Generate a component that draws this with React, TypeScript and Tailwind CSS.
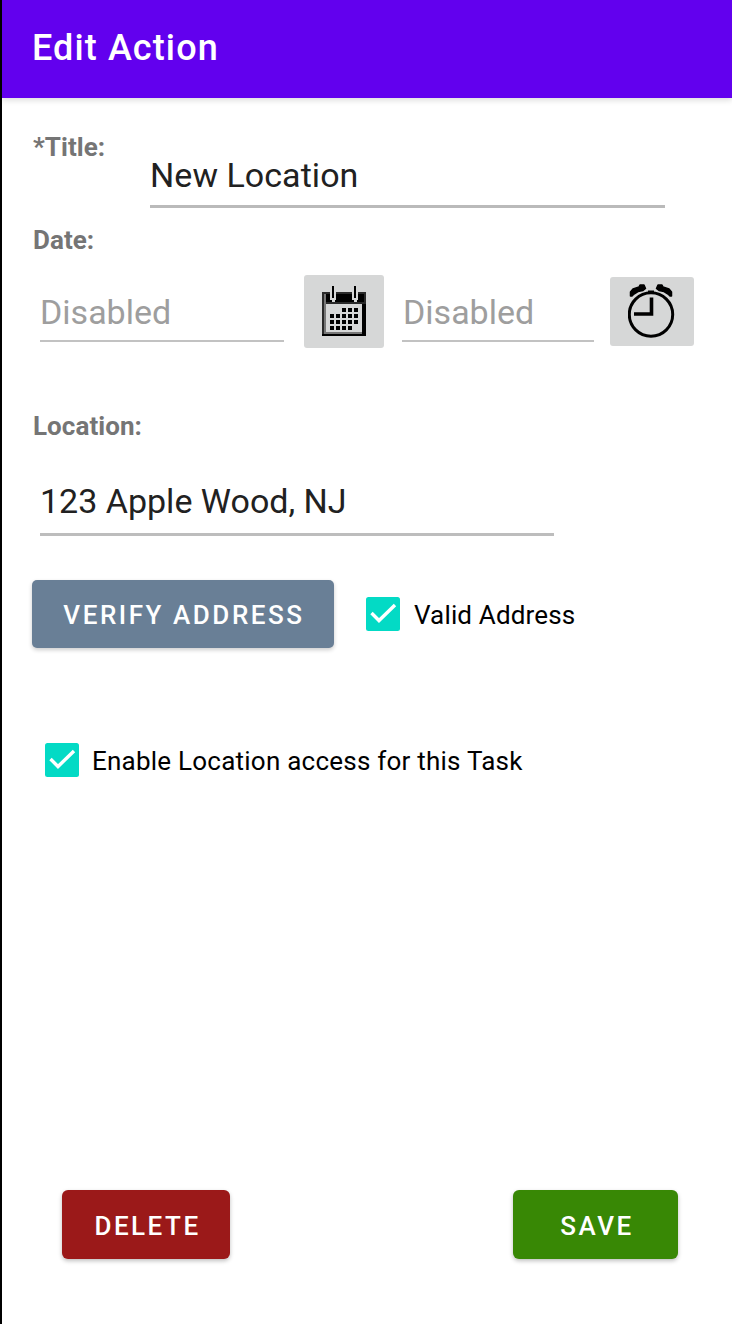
import type { ReactNode } from "react";

function Label({ children }: { children: ReactNode }) {
  return <div className="pl-px text-[26px] leading-8 font-bold tracking-[0.05px] whitespace-nowrap text-[#757575]">{children}</div>;
}

function CheckBox({ children }: { children: ReactNode }) {
  return (
    <div className="flex h-9 items-center">
      <svg width="34" height="34" viewBox="0 0 34 34" className="shrink-0">
        <rect width="34" height="34" rx="2.5" fill="#03dac5" />
        <path d="M5.5 16 L13 23.500 L29 8" fill="none" stroke="#fff" strokeWidth="3.4" />
      </svg>
      {children}
    </div>
  );
}

function CalendarIcon() {
  const dots = [
    [18, 24], [24, 24], [30, 24],
    [6, 30], [12, 30], [18, 30], [24, 30], [30, 30],
    [6, 36], [12, 36], [18, 36], [24, 36], [30, 36],
    [6, 42], [12, 42], [18, 42], [24, 42],
  ];
  return (
    <svg width="44" height="50" viewBox="0 0 44 50" shapeRendering="crispEdges">
      <rect y="6" width="44" height="44" fill="#2a2a2a" />
      <rect x="2" y="8" width="40" height="8" fill="#000" />
      <rect x="4" y="18" width="36" height="28" fill="#d6d7d7" />
      <path d="M4 46h36v2H4z" fill="#777" />
      <path d="M2 8h2v40H2z" fill="#777" />
      <path d="M40 18h4v32H0v-2h40z" fill="#000" />
      <path d="M8 6h2v8H8zM12 4h2v10h-2zM10 12h3v4h-3zM30 6h2v8h-2zM34 4h2v10h-2zM32 12h3v4h-3z" fill="#d6d7d7" />
      <path d="M10 0h2v12h-2zM32 0h2v12h-2z" fill="#000" />
      {dots.map(([x, y]) => (
        <rect key={`${x}-${y}`} x={x + 2} y={y - 2} width="4" height="4" fill="#000" />
      ))}
    </svg>
  );
}

function AlarmIcon() {
  return (
    <svg width="48" height="56" viewBox="0 0 48 56" fill="none" stroke="#000">
      <circle cx="23" cy="31.500" r="21.700" strokeWidth="3" />
      <path d="M23.500 14.500v16.500H6" strokeWidth="3.600" />
      <path d="M2.500 13V9L5 6L11 4L12 2H16L17.500 5.500L15 7.500L10 8.500L6 11L4 13zM43.500 13V9L41 6L35 4L34 2H30L28.500 5.500L31 7.500L36 8.500L40 11L42 13z" fill="#000" strokeWidth="1.500" strokeLinejoin="round" />
      <path d="M20 8.500h6" strokeWidth="2" />
    </svg>
  );
}

export default function App() {
  return (
    <div className="flex h-[1324px] w-[732px] flex-col border-l-2 border-black bg-white font-[Roboto,sans-serif]">
      <header className="flex h-[98px] shrink-0 items-center bg-[#6200ee] pb-0.5 pl-[30px] shadow-[0_2px_6px_rgba(0,0,0,0.15)]">
        <h1 className="text-[36px] font-medium tracking-[1.1px] text-white">Edit Action</h1>
      </header>

      <main className="flex flex-1 flex-col pl-[30px]">
        <div className="flex h-[110px] items-start">
          <div className="w-[118px] pt-[33px]">
            <Label>*Title:</Label>
          </div>
          <div className="mt-[54px] h-14 w-[515px] border-b-[3px] border-[#bababa] text-[34px] leading-[46px] tracking-[0.05px] text-[#212121]">New Location</div>
        </div>

        <div className="pt-4">
          <Label>Date:</Label>
        </div>
        <div className="mt-[18px] flex h-[74px] items-start">
          <div className="ml-2 h-[68px] w-[244px] border-b-2 border-[#c2c2c2] text-[34px] leading-[76px] text-[#9e9e9e]">Disabled</div>
          <button className="mt-px ml-5 flex h-[73px] w-20 justify-center rounded-[3px] bg-[#d6d7d7] pt-[11px]">
            <CalendarIcon />
          </button>
          <div className="ml-[18px] h-[68px] w-[192px] border-b-2 border-[#c2c2c2] pl-px text-[34px] leading-[76px] text-[#9e9e9e]">Disabled</div>
          <button className="mt-[3px] ml-4 flex h-[69px] w-[84px] justify-center rounded-[3px] bg-[#d6d7d7] pt-1.5">
            <AlarmIcon />
          </button>
        </div>

        <div className="pt-[62px]">
          <Label>Location:</Label>
        </div>
        <div className="mt-9 ml-2 h-[58px] w-[514px] border-b-[3px] border-[#bdbdbd] text-[34px] leading-[46px] text-[#212121]">123 Apple Wood, NJ</div>

        <div className="mt-11 flex h-[68px] items-center">
          <button className="h-[68px] w-[302px] rounded-[5px] bg-[#697f96] pt-0.5 pl-0.5 text-[26px] font-medium tracking-[2.55px] text-white shadow-[0_2px_4px_rgba(0,0,0,0.2)]">VERIFY ADDRESS</button>
          <div className="ml-8">
            <CheckBox>
              <span className="pt-0.5 pl-3.5 text-[26px] leading-9 tracking-[0.15px] whitespace-nowrap text-black">Valid Address</span>
            </CheckBox>
          </div>
        </div>

        <div className="mt-[94px] ml-[13px]">
          <CheckBox>
            <span className="pt-0.5 pl-[13px] text-[26px] leading-9 tracking-[0.23px] whitespace-nowrap text-black">Enable Location access for this Task</span>
          </CheckBox>
        </div>

        <div className="mt-auto mb-[65px] flex justify-between pr-[54px] pl-[30px]">
          <button className="h-[69px] w-[168px] rounded-[6px] bg-[#9b1919] pt-[3px] pl-[3px] text-[26px] font-medium tracking-[2.5px] text-white shadow-[0_2px_4px_rgba(0,0,0,0.25)]">DELETE</button>
          <button className="h-[69px] w-[165px] rounded-[6px] bg-[#388805] pt-[3px] pl-[3px] text-[26px] font-medium tracking-[2.5px] text-white shadow-[0_2px_4px_rgba(0,0,0,0.25)]">SAVE</button>
        </div>
      </main>
    </div>
  );
}
